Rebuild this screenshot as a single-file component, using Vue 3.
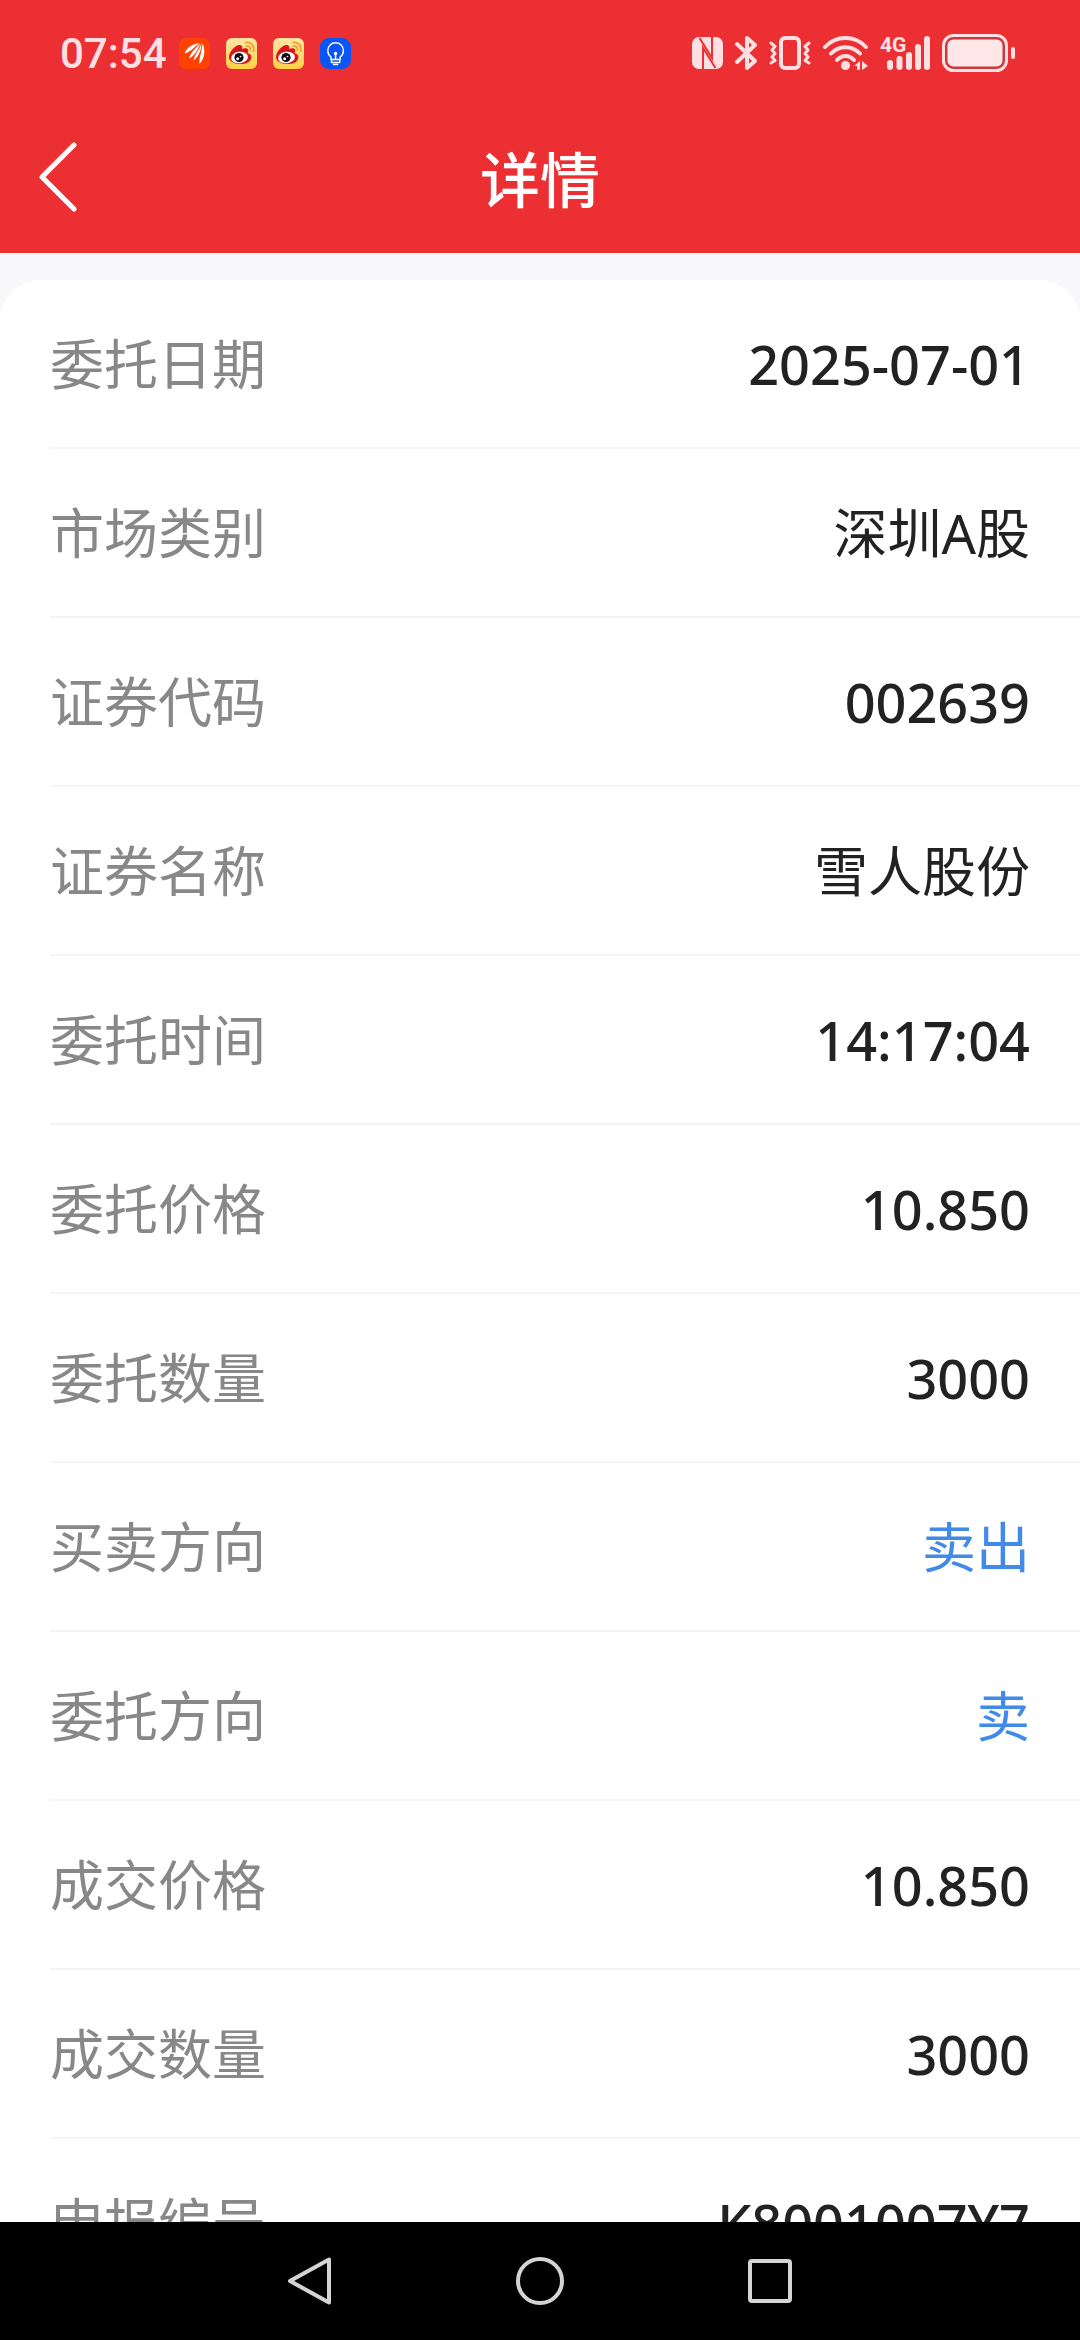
<script setup>
import { ref } from 'vue';

const time = ref('07:54');
const rows = ref([
  { label: '委托日期', value: '2025-07-01' },
  { label: '市场类别', value: '深圳A股', text: true },
  { label: '证券代码', value: '002639' },
  { label: '证券名称', value: '雪人股份', text: true },
  { label: '委托时间', value: '14:17:04' },
  { label: '委托价格', value: '10.850' },
  { label: '委托数量', value: '3000' },
  { label: '买卖方向', value: '卖出', text: true, sell: true },
  { label: '委托方向', value: '卖', text: true, sell: true },
  { label: '成交价格', value: '10.850' },
  { label: '成交数量', value: '3000' },
  { label: '申报编号', value: 'K8001007Y7' },
]);
</script>
<template>
<div class="page">
  <header class="top">
    <div class="status-bar">
      <span class="time">{{ time }}</span>
      <div class="apps">
        <svg width="31" height="31" viewBox="0 0 31 31">
          <rect width="31" height="31" rx="7" fill="#ff4200" />
          <g fill="#fff">
            <path d="M20 5C14 6 8 9 5.500 15.500C10 14.500 14 11 20 5Z" />
            <path d="M21.500 5C17 10 12 14 10 20.500C15 18.500 19 12 21.500 5Z" />
            <path d="M22.500 5C21 11 16 16 14.500 22.500C19.500 19 22.500 12 22.500 5Z" />
            <path d="M23.500 5C23.500 12 20 18 20.500 26C26 20 26.500 12 23.500 5Z" />
          </g>
        </svg>
        <svg v-for="n in 2" :key="n" width="31" height="31" viewBox="0 0 31 31">
          <defs>
            <linearGradient :id="'weibo' + n" x1="0" y1="0" x2="0" y2="1">
              <stop offset="0" stop-color="#ffe6a6" />
              <stop offset="1" stop-color="#ffd043" />
            </linearGradient>
          </defs>
          <rect width="31" height="31" rx="6" :fill="'url(#weibo' + n + ')'" />
          <path d="M3 19C3 14 9 7 13.500 7C16 7 16.500 9 16 11C18 10 21 9.500 22 11.500C22.500 13 22 14 21.500 15C25 16 26 18 25 21C23.500 25 18 26.500 13 26C7 25.500 3 23 3 19Z" fill="#d8141f" />
          <ellipse cx="13.500" cy="19.500" rx="8.500" ry="5.700" fill="#fff" transform="rotate(-8 13.500 19.500)" />
          <circle cx="13" cy="19.500" r="4.600" fill="#111" />
          <circle cx="11.700" cy="20.700" r="1.500" fill="#fff" />
          <circle cx="14.500" cy="18.500" r=".8" fill="#fff" />
          <path d="M20 4.500C25 3.500 29 7.500 27.500 13M20.500 8.200C23 7.700 25 9.500 24.200 12" fill="none" stroke="#f3a32c" stroke-width="1.800" stroke-linecap="round" />
        </svg>
        <svg width="31" height="31" viewBox="0 0 31 31">
          <rect width="31" height="31" rx="9" fill="#0a55f5" />
          <g fill="none" stroke="#fff" stroke-width="1.400" stroke-linecap="round" stroke-linejoin="round">
            <path d="M11 21.500V19C9 17.500 7.800 15 7.800 12.500A7.800 7.800 0 0 1 23.400 12.500C23.400 15 22.200 17.500 20.200 19V21.500Z" />
            <path d="M11.500 21.500V24.500H19.700V21.500M13.500 26.500H17.700M15.600 16V21" />
          </g>
          <circle cx="15.600" cy="15.500" r="1.700" fill="#fff" />
        </svg>
      </div>
      <div class="signals">
        <!-- nfc -->
        <svg width="31" height="34" viewBox="0 0 31 34">
          <rect y="1" width="31" height="32" rx="7" fill="#ffe0e2" />
          <path d="M11 34V12L23.500 32M20 0V22L7.500 2" fill="none" stroke="#ec2f32" stroke-width="2" />
        </svg>
        <!-- bluetooth -->
        <svg width="22" height="36" viewBox="0 0 22 36">
          <path d="M2 9L20 26L12 33V3L20 10L2 27" fill="none" stroke="#ffe0e2" stroke-width="4" stroke-linecap="round" stroke-linejoin="round" />
        </svg>
        <!-- vibrate -->
        <svg width="42" height="36" viewBox="0 0 42 36">
          <g fill="none" stroke="#ffe0e2" stroke-linecap="round" stroke-linejoin="round">
            <rect x="12" y="3" width="18" height="30" rx="4" stroke-width="4" />
            <path d="M2 8L6 11.500L3 15L6 18.500L3 22L6 25.500L2 28M40 8L36 11.500L39 15L36 18.500L39 22L36 25.500L40 28" stroke-width="3" />
          </g>
        </svg>
        <!-- wifi -->
        <svg width="45" height="36" viewBox="0 0 45 36">
          <g fill="none" stroke="#ffe0e2" stroke-width="4" stroke-linecap="round">
            <path d="M2 12C13 0 32 0 43 12" />
            <path d="M8 18.500C16 10 29 10 37 18.500" />
            <path d="M14 25C19 19.500 26 19.500 31 25" />
          </g>
          <circle cx="22.500" cy="30.500" r="4.500" fill="#ffe0e2" />
          <path d="M31 31L37 26V35H34V31ZM39 26L45 31L39 35Z" fill="#ffe0e2" />
        </svg>
        <!-- mobile signal -->
        <svg class="mobile" width="50" height="36" viewBox="0 0 50 36">
          <text x="0" y="17" class="net">4G</text>
          <g fill="#ffe0e2">
            <rect x="7" y="25" width="6" height="10" rx="3" />
            <rect x="16.500" y="21" width="6" height="14" rx="3" />
            <rect x="26" y="17" width="6" height="18" rx="3" />
            <rect x="35" y="9" width="6" height="26" rx="3" />
            <rect x="44" y="1" width="6" height="34" rx="3" />
          </g>
        </svg>
        <!-- battery -->
        <svg width="73" height="38" viewBox="0 0 73 38">
          <rect x="1.500" y="1.500" width="63" height="35" rx="10" fill="#c9393d" stroke="#ffe0e2" stroke-width="3" />
          <rect x="5.500" y="5.500" width="55" height="27" rx="6" fill="#ffe7e8" />
          <rect x="69" y="13" width="4" height="12" rx="2" fill="#ffe0e2" />
        </svg>
      </div>
    </div>
    <div class="title-bar">
      <button class="back" type="button" aria-label="返回">
        <svg width="40" height="70" viewBox="0 0 40 70">
          <path d="M36 3L4 35L36 67" fill="none" stroke="#fff" stroke-width="5" stroke-linecap="round" stroke-linejoin="round" />
        </svg>
      </button>
      <h1>详情</h1>
    </div>
  </header>
  <main class="content">
    <dl class="card">
      <div v-for="row in rows" :key="row.label" class="row">
        <dt>{{ row.label }}</dt>
        <dd :class="{ text: row.text, sell: row.sell }">{{ row.value }}</dd>
      </div>
    </dl>
  </main>
  <nav class="nav-bar">
    <button type="button" aria-label="后退">
      <svg width="50" height="50" viewBox="0 0 50 50"><path d="M44 3.500V46.500L5 25Z" /></svg>
    </button>
    <button type="button" aria-label="主页">
      <svg width="50" height="50" viewBox="0 0 50 50"><circle cx="25" cy="25" r="22" /></svg>
    </button>
    <button type="button" aria-label="最近任务">
      <svg width="50" height="50" viewBox="0 0 50 50"><rect x="5" y="5" width="40" height="40" rx="2" /></svg>
    </button>
  </nav>
</div>
</template>
<style>
body {
  margin: 0;
}
</style>
<style scoped>
.page {
  display: flex;
  flex-direction: column;
  height: 100vh;
  background: #f9f9fc;
  font-family: "Noto Sans", "Noto Sans CJK SC", sans-serif;
}
.top {
  flex: none;
  background: #ec2f32;
}
.status-bar {
  display: flex;
  align-items: center;
  height: 106px;
  padding: 0 65px 0 60px;
}
.time {
  font-family: Roboto, sans-serif;
  font-size: 42px;
  font-weight: 500;
  color: #ffe0e2;
}
.apps {
  display: flex;
  gap: 16px;
  margin-left: 12px;
}
.signals {
  display: flex;
  align-items: center;
  gap: 12px;
  margin-left: auto;
}
.mobile {
  overflow: visible;
}
.net {
  font-family: Roboto, sans-serif;
  font-size: 21px;
  font-weight: 700;
  fill: #ffe0e2;
}
.title-bar {
  display: grid;
  grid-template-columns: 1fr auto 1fr;
  align-items: center;
  box-sizing: border-box;
  height: 147px;
  padding-bottom: 6px;
}
.back {
  justify-self: start;
  padding: 0 38px;
  border: 0;
  background: none;
  cursor: pointer;
}
.back svg {
  display: block;
}
h1 {
  margin: 0;
  font-family: "Noto Sans CJK SC", sans-serif;
  font-size: 60px;
  font-weight: 500;
  line-height: 80px;
  color: #fff;
}
.content {
  flex: 1;
  min-height: 0;
  overflow: hidden;
}
.card {
  margin: 27px 0 0;
  padding-left: 50px;
  border-radius: 40px 40px 0 0;
  background: #fff;
}
.row {
  display: flex;
  align-items: center;
  justify-content: space-between;
  height: 167px;
  padding-right: 50px;
  border-bottom: 2px solid #f4f4f4;
  font-size: 54px;
  line-height: 80px;
}
dt {
  color: #888;
}
dd {
  margin: 0;
  font-weight: 500;
  color: #222;
}
.text {
  font-weight: 400;
}
.sell {
  color: #428ae8;
}
.nav-bar {
  display: flex;
  flex: none;
  align-items: center;
  justify-content: center;
  gap: 180px;
  height: 118px;
  background: #000;
}
.nav-bar button {
  padding: 0;
  border: 0;
  background: none;
  cursor: pointer;
}
.nav-bar svg {
  display: block;
  fill: none;
  stroke: #d4d4d4;
  stroke-width: 4;
  stroke-linejoin: round;
}
</style>
